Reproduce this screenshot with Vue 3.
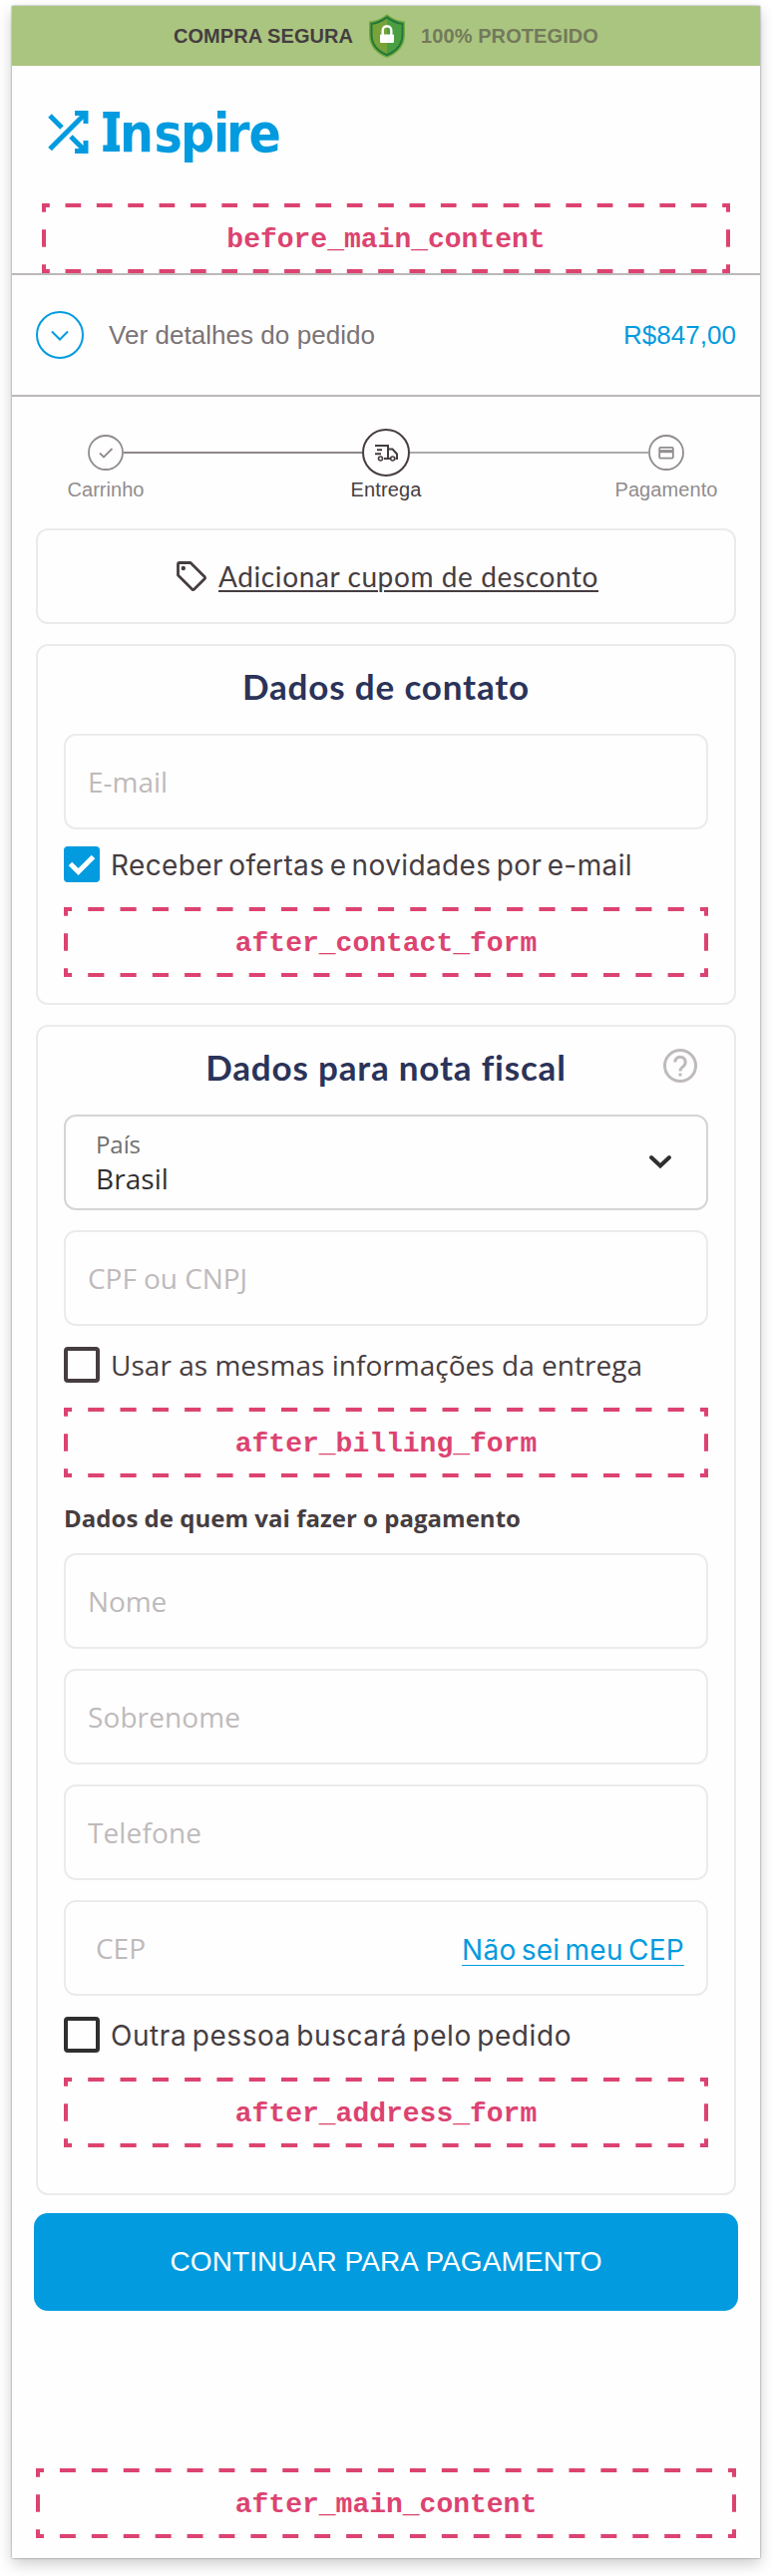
<script setup>
import { h } from 'vue'

// Spreads the letters of a label so that it fills the given width.
const vFit = {
  mounted(el, { value }) {
    const natural = el.getBoundingClientRect().width
    const count = el.textContent.trim().length
    el.style.letterSpacing = `${(value - natural) / count}px`
  }
}

// Dashed placeholder with half dashes meeting at the corners.
const Slot = (props) => {
  const w = props.width
  const p = w / props.dashes
  const hd = `${p / 2} ${p / 2}`
  return h('div', { class: 'hook' }, [
    h('svg', { class: 'hook-frame', width: w, height: 70, viewBox: `0 0 ${w} 70` }, [
      h('path', { d: `M0 2H${w}M0 68H${w}`, 'stroke-dasharray': hd, 'stroke-dashoffset': p / 4 }),
      h('path', { d: `M2 0V70M${w - 2} 0V70`, 'stroke-dasharray': '17.5 17.5', 'stroke-dashoffset': 8.75 })
    ]),
    h('span', props.name)
  ])
}
Slot.props = ['name', 'width', 'dashes']

const personFields = [
  { label: 'Nome', width: 79 },
  { label: 'Sobrenome', width: 153 },
  { label: 'Telefone', width: 114 }
]
</script>

<template>
  <main class="page">
    <header class="secure">
      <strong v-fit="180">COMPRA SEGURA</strong>
      <svg width="36" height="44" viewBox="0 0 36 44">
        <path d="M18 0C12 5 6 7 0 7.500V21C0 32 7 40 18 44C29 40 36 32 36 21V7.500C30 7 24 5 18 0Z" fill="#72a93f" />
        <path d="M18 2C12.500 6.200 7 8.300 1.500 9V21C1.500 31 8 38.500 18 42.300C28 38.500 34.500 31 34.500 21V9C29 8.300 23.500 6.200 18 2Z" fill="#22773a" />
        <path d="M18 4.500C13.500 8 8.500 10 3.500 10.700V21C3.500 30 9 36.500 18 40Z" fill="#78a23a" />
        <path d="M18 4.500C22.500 8 27.500 10 32.500 10.700V21C32.500 30 27 36.500 18 40Z" fill="#4b9f42" />
        <path d="M13.700 21V16.500a4.300 4.300 0 0 1 8.600 0V21" fill="none" stroke="#fff" stroke-width="2.400" />
        <rect x="11" y="20.500" width="14" height="8.500" rx="1" fill="#fff" />
      </svg>
      <strong class="muted" v-fit="178">100% PROTEGIDO</strong>
    </header>

    <div class="brand">
      <svg width="250" height="100" viewBox="42 85 250 100">
        <g fill="none" stroke="#029bdf" stroke-width="5">
          <path d="M50 149.500L84 115.500M50 116L62 128M71 137L84 150" />
          <path d="M75 113.500H86V124M86 141V151.500H75" />
        </g>
        <text class="wordmark" x="103.200 120 154.500 181 214 227 249.500" y="152">Inspire</text>
        <path d="M103.300 112H120V118.500H103.300ZM103.300 145.500H120V152H103.300Z" fill="#029bdf" />
      </svg>
    </div>
    <Slot class="inset" name="before_main_content" :width="690" :dashes="22" />

    <section class="order">
      <svg width="48" height="48" viewBox="0 0 48 48" fill="none" stroke="#029bdf" stroke-width="2">
        <circle cx="24" cy="24" r="23" />
        <path d="M16 20.500L24 28.500L32 20.500" />
      </svg>
      <span v-fit="267">Ver detalhes do pedido</span>
      <span class="total"><span v-fit="113">R$847,00</span></span>
    </section>

    <nav class="steps">
      <div class="step">
        <div class="disc">
          <svg width="36" height="36" viewBox="0 0 36 36" fill="none" stroke="#918c8d" stroke-width="1.800">
            <circle cx="18" cy="18" r="17" />
            <path d="M12 18.500L16 22.500L24.500 14" />
          </svg>
        </div>
        <span v-fit="77">Carrinho</span>
      </div>
      <i class="line"></i>
      <div class="step current">
        <div class="disc">
          <svg width="48" height="48" viewBox="0 0 48 48" fill="none" stroke="#463d41" stroke-width="2">
            <circle cx="24" cy="24" r="23" />
            <path d="M13 17H26V30H22M15 21.200H20M13 25.300H19M26 20.500H30.500L35 25.500V30H33.500M26 30H28" />
            <circle cx="18.500" cy="30" r="2" stroke-width="1.600" />
            <circle cx="30.700" cy="30" r="2" stroke-width="1.600" />
          </svg>
        </div>
        <span v-fit="71">Entrega</span>
      </div>
      <i class="line pending"></i>
      <div class="step">
        <div class="disc">
          <svg width="36" height="36" viewBox="0 0 36 36" fill="none" stroke="#918c8d" stroke-width="1.800">
            <circle cx="18" cy="18" r="17" />
            <rect x="11.200" y="12.800" width="13.600" height="10.800" rx="1" />
            <path d="M11 16.700H25" stroke-width="3" />
          </svg>
        </div>
        <span v-fit="103">Pagamento</span>
      </div>
    </nav>

    <section class="card coupon">
      <svg width="32" height="32" viewBox="0 0 32 32" fill="none" stroke="#463d41" stroke-width="2.800" stroke-linejoin="round">
        <path d="M2.500 4Q2.500 2.500 4 2.500H15L29.300 16.800Q30 17.700 29.300 18.500L18.500 29.300Q17.700 30 16.800 29.300L2.500 15Z" />
        <circle cx="7.800" cy="8" r="2.200" fill="#463d41" stroke="none" />
      </svg>
      <a v-fit="381">Adicionar cupom de desconto</a>
    </section>

    <section class="card contact">
      <h2><span v-fit="288">Dados de contato</span></h2>
      <div class="field"><span v-fit="80">E-mail</span></div>
      <label class="check first">
        <svg width="36" height="36" viewBox="0 0 36 36">
          <rect width="36" height="36" rx="4" fill="#029bdf" />
          <path d="M6.500 17.500L14.500 25.500L29.500 10.500" fill="none" stroke="#fff" stroke-width="5" />
        </svg>
        <span class="geo" v-fit="523">Receber ofertas e novidades por e-mail</span>
      </label>
      <Slot name="after_contact_form" :width="646" :dashes="20" />
    </section>

    <section class="card invoice">
      <h2><span v-fit="361">Dados para nota fiscal</span>
        <svg class="help" width="36" height="36" viewBox="0 0 36 36" fill="none" stroke="#bfbabb" stroke-width="3">
          <circle cx="18" cy="18" r="15.500" />
          <path d="M12.800 14.500a5.200 5.200 0 1 1 8.700 3.800C19.500 20 18 20.800 18 23.500" />
          <path d="M18 25.600V28.500" />
        </svg>
      </h2>
      <div class="field select">
        <div>
          <small v-fit="45">País</small>
          <b v-fit="73">Brasil</b>
        </div>
        <svg width="26" height="18" viewBox="0 0 26 18" fill="none" stroke="#2f2f2f" stroke-width="4" stroke-linecap="round">
          <path d="M4 4L13 12.500L22 4" />
        </svg>
      </div>
      <div class="field"><span v-fit="160">CPF ou CNPJ</span></div>
      <label class="check">
        <i class="box"></i>
        <span v-fit="533">Usar as mesmas informações da entrega</span>
      </label>
      <Slot name="after_billing_form" :width="646" :dashes="20" />
      <h3><span v-fit="458">Dados de quem vai fazer o pagamento</span></h3>
      <div v-for="f in personFields" :key="f.label" class="field">
        <span v-fit="f.width">{{ f.label }}</span>
      </div>
      <div class="field zip">
        <span v-fit="50">CEP</span>
        <a class="geo" v-fit="223">Não sei meu CEP</a>
      </div>
      <label class="check">
        <i class="box dark"></i>
        <span class="geo" v-fit="462">Outra pessoa buscará pelo pedido</span>
      </label>
      <Slot name="after_address_form" :width="646" :dashes="20" />
    </section>

    <button type="button"><span v-fit="433">CONTINUAR PARA PAGAMENTO</span></button>
    <Slot class="closing" name="after_main_content" :width="702" :dashes="22" />
  </main>
</template>

<style>
body {
  background: #fff;
}
#app {
  display: flow-root;
}
.hook {
  position: relative;
  box-sizing: border-box;
  height: 70px;
  padding-top: 3px;
  display: flex;
  align-items: center;
  justify-content: center;
  color: #dc4370;
  font: bold 28px/34px "Liberation Mono", monospace;
}
.hook-frame {
  position: absolute;
  inset: 0;
  fill: none;
  stroke: #dc4370;
  stroke-width: 4;
}
</style>

<style scoped>
* {
  box-sizing: border-box;
}
.page {
  width: 750px;
  height: 2560px;
  margin: 6px 12px 18px;
  background: #fefefe;
  box-shadow: 0 0 2px rgba(0, 0, 0, 0.45), 0 6px 14px rgba(0, 0, 0, 0.2);
  font-family: "Liberation Sans", Arial, sans-serif;
  color: #463d41;
}
.page span,
.page a,
.page strong {
  white-space: nowrap;
}
svg {
  flex: none;
  display: block;
}
.secure {
  height: 60px;
  display: flex;
  align-items: center;
  padding-left: 162px;
  background: #aac57f;
  font-size: 20px;
}
.secure svg {
  margin: 0 16px;
}
.secure .muted {
  color: #73795c;
}
.brand {
  height: 138px;
  padding: 19px 0 0 30px;
}
.wordmark {
  font: bold 53px "DejaVu Sans Condensed", "DejaVu Sans", sans-serif;
  font-stretch: condensed;
  fill: #029bdf;
}
.inset {
  margin: 0 30px;
}
.order {
  height: 124px;
  border: solid #bcb7b8;
  border-width: 2px 0;
  display: flex;
  align-items: center;
  padding: 0 24px;
  color: #7b7375;
  font-size: 26px;
}
.order svg {
  margin-right: 25px;
}
.total {
  margin-left: auto;
  color: #029bdf;
}
.steps {
  display: flex;
  height: 132px;
  padding: 32px 76px 0;
}
.step {
  width: 36px;
  display: flex;
  flex-direction: column;
  align-items: center;
  font-size: 20px;
  line-height: 24px;
  color: #918c8d;
}
.step.current {
  width: 48px;
  color: #463d41;
}
.disc {
  height: 49px;
  padding-bottom: 1px;
  display: flex;
  align-items: center;
}
.line {
  flex: 1;
  height: 2px;
  margin-top: 23px;
  background: #8d8788;
}
.line.pending {
  background: #adaaab;
}
.card {
  margin: 0 24px 20px;
  border: 2px solid #ebebeb;
  border-radius: 12px;
  padding: 0 26px;
}
.coupon {
  height: 96px;
  display: flex;
  align-items: center;
  padding-left: 138px;
  font: 28px/34px Lato, sans-serif;
}
.coupon svg {
  margin-right: 11px;
}
.coupon a {
  text-decoration: underline;
  text-decoration-thickness: 2px;
  text-underline-offset: 3px;
}
.contact {
  height: 362px;
}
.invoice {
  height: 1174px;
  margin-bottom: 18px;
}
h2 {
  position: relative;
  margin: 0 0 7px;
  text-align: center;
  font: bold 35px/81px Lato, sans-serif;
  color: #2b3359;
}
.help {
  position: absolute;
  right: 10px;
  top: 21px;
}
.field {
  height: 96px;
  margin-bottom: 20px;
  border: 2px solid #ebebeb;
  border-radius: 12px;
  padding: 0 22px;
  display: flex;
  align-items: center;
  color: #bfbabb;
  font: 28px/34px "Open Sans", sans-serif;
}
.select {
  justify-content: space-between;
  align-items: flex-start;
  border-color: #d5d5d5;
  padding: 11px 33px 0 30px;
}
.select div {
  display: flex;
  flex-direction: column;
  align-items: flex-start;
}
.select small {
  font-size: 24px;
  color: #6f6f6f;
}
.select b {
  font-weight: 400;
  color: #2f2f2f;
}
.select svg {
  margin-top: 26px;
}
.zip {
  justify-content: space-between;
  padding-left: 30px;
}
.zip a {
  margin-top: 5px;
  line-height: 30px;
  border-bottom: 1.5px solid #029bdf;
  color: #029bdf;
}
.geo {
  font-family: Inter, sans-serif;
  word-spacing: -3px;
}
.check {
  display: flex;
  align-items: center;
  height: 36px;
  margin: 21px 0 25px;
  font: 28px/36px "Open Sans", sans-serif;
}
.check.first {
  margin-top: -3px;
}
.check > span {
  margin-left: 11px;
}
.check .geo {
  padding-top: 2px;
}
.box {
  width: 36px;
  height: 36px;
  border: 4px solid #463d41;
  border-radius: 4px;
}
.box.dark {
  border-color: #2f2f2f;
}
h3 {
  height: 76px;
  margin: 0;
  padding-top: 5px;
  font: bold 24px/71px "Open Sans", sans-serif;
}
button {
  display: flex;
  align-items: center;
  justify-content: center;
  width: 706px;
  height: 98px;
  margin: 0 22px 158px;
  border: 0;
  border-radius: 14px;
  background: #029bdf;
  color: #fff;
  font: 28px "Liberation Sans", Arial, sans-serif;
}
.closing {
  margin: 0 24px;
}
</style>
